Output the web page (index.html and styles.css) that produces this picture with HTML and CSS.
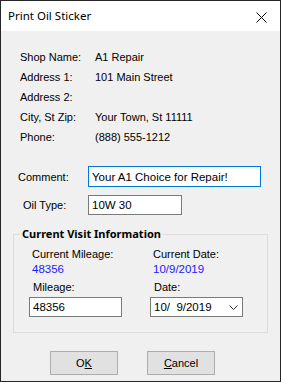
FILE: index.html
```html
<!DOCTYPE html>
<html lang="en">
<head>
  <meta charset="UTF-8">
  <title>Print Oil Sticker</title>
  <link rel="stylesheet" href="styles.css">
</head>
<body>
  <div class="window">
    <div class="titlebar">
      <span class="title">Print Oil Sticker</span>
      <span class="close">
        <svg width="11" height="11" viewBox="0 0 11 11">
          <path d="M0.5 0.5 L10.5 10.5 M10.5 0.5 L0.5 10.5" stroke="#000" stroke-width="1" fill="none"/>
        </svg>
      </span>
    </div>
    <div class="content">
      <div class="shop-info">
        <span>Shop Name:</span><span>A1 Repair</span>
        <span>Address 1:</span><span>101 Main Street</span>
        <span>Address 2:</span><span></span>
        <span>City, St Zip:</span><span>Your Town, St 11111</span>
        <span>Phone:</span><span>(888) 555-1212</span>
      </div>

      <div class="form-row comment-row">
        <label class="comment-label">Comment:</label>
        <div class="textbox focused wide">Your A1 Choice for Repair!</div>
      </div>
      <div class="form-row oil-row">
        <label class="oil-label">Oil Type:</label>
        <div class="textbox narrow">10W 30</div>
      </div>

      <fieldset class="group">
        <legend>Current Visit Information</legend>
        <div class="group-cols">
          <div class="group-col">
            <span class="caption">Current Mileage:</span>
            <span class="current">48356</span>
            <span class="caption field-caption">Mileage:</span>
            <div class="textbox field">48356</div>
          </div>
          <div class="group-col">
            <span class="caption">Current Date:</span>
            <span class="current">10/9/2019</span>
            <span class="caption field-caption">Date:</span>
            <div class="textbox field datepick">
              <span class="date-text">10/  9/2019</span>
              <svg class="chevron" width="9" height="5" viewBox="0 0 9 5">
                <path d="M0.5 0.5 L4.5 4.5 L8.5 0.5" stroke="#333" stroke-width="1" fill="none"/>
              </svg>
            </div>
          </div>
        </div>
      </fieldset>

      <div class="buttons">
        <button class="btn">O<u>K</u></button>
        <button class="btn"><u>C</u>ancel</button>
      </div>
    </div>
  </div>
</body>
</html>
```

FILE: styles.css
```css
body {
  margin: 0;
  padding: 0;
  font-family: "Liberation Sans", Arial, sans-serif;
  font-size: 11px;
  color: #000;
}
.window {
  width: 281px;
  height: 382px;
  box-sizing: border-box;
  border: 1px solid #262626;
  display: flex;
  flex-direction: column;
  background: #f0f0f0;
}
.titlebar {
  height: 30px;
  background: #fff;
  display: flex;
  align-items: center;
  justify-content: space-between;
  flex-shrink: 0;
}
.title {
  font-family: "Noto Sans", sans-serif;
  font-size: 11.5px;
  padding-left: 7px;
  padding-bottom: 1px;
}
.close {
  display: flex;
  padding-right: 13px;
  padding-top: 2px;
}
.content {
  flex: 1;
  display: flex;
  flex-direction: column;
}
/* datos del taller */
.shop-info {
  display: grid;
  grid-template-columns: 75px 1fr;
  grid-auto-rows: 20px;
  align-items: center;
  padding: 16px 0 0 19px;
}
.form-row {
  display: flex;
  align-items: center;
}
.comment-row {
  margin-top: 19px;
  height: 21px;
}
.oil-row {
  margin-top: 8px;
  height: 20px;
}
.comment-label {
  width: 70px;
  padding-left: 17px;
}
.oil-label {
  width: 65px;
  padding-left: 22px;
}
.textbox {
  box-sizing: border-box;
  background: #fff;
  border: 1px solid #7a7a7a;
  height: 20px;
  display: flex;
  align-items: center;
  padding-left: 3px;
  font-size: 11.5px;
}
.textbox.focused {
  border-color: #0078d7;
  height: 21px;
}
.wide {
  width: 173px;
}
.narrow {
  width: 94px;
}
/* grupo de visita */
.group {
  margin: 12px 12px 0 12px;
  padding: 0 0 15px 0;
  border: 1px solid #dcdcdc;
  min-width: 0;
}
.group legend {
  font-family: "Noto Sans", sans-serif;
  font-weight: bold;
  font-size: 11px;
  line-height: 14px;
  padding: 0 2px;
  margin-left: 6px;
}
.group-cols {
  display: flex;
  padding-left: 15px;
  gap: 28px;
}
.group-col {
  display: flex;
  flex-direction: column;
  width: 93px;
}
.caption {
  line-height: 16px;
  padding-left: 3px;
  margin-top: 5px;
}
.current {
  color: #1a1aff;
  line-height: 16px;
  padding-left: 3px;
  font-size: 11.5px;
  margin-top: -1px;
}
.field-caption {
  margin-top: 2px;
  padding-left: 4px;
}
.field {
  margin-top: 2px;
  width: 93px;
}
.datepick {
  justify-content: space-between;
  padding-right: 4px;
}
.date-text {
  white-space: pre;
}
.chevron {
  margin-top: 1px;
}
.buttons {
  display: flex;
  gap: 29px;
  padding-left: 49px;
  margin-top: 18px;
}
.btn {
  width: 68px;
  height: 24px;
  background: #e1e1e1;
  border: 1px solid #adadad;
  font-family: "Liberation Sans", Arial, sans-serif;
  font-size: 11px;
  color: #000;
  padding: 0;
}
```
